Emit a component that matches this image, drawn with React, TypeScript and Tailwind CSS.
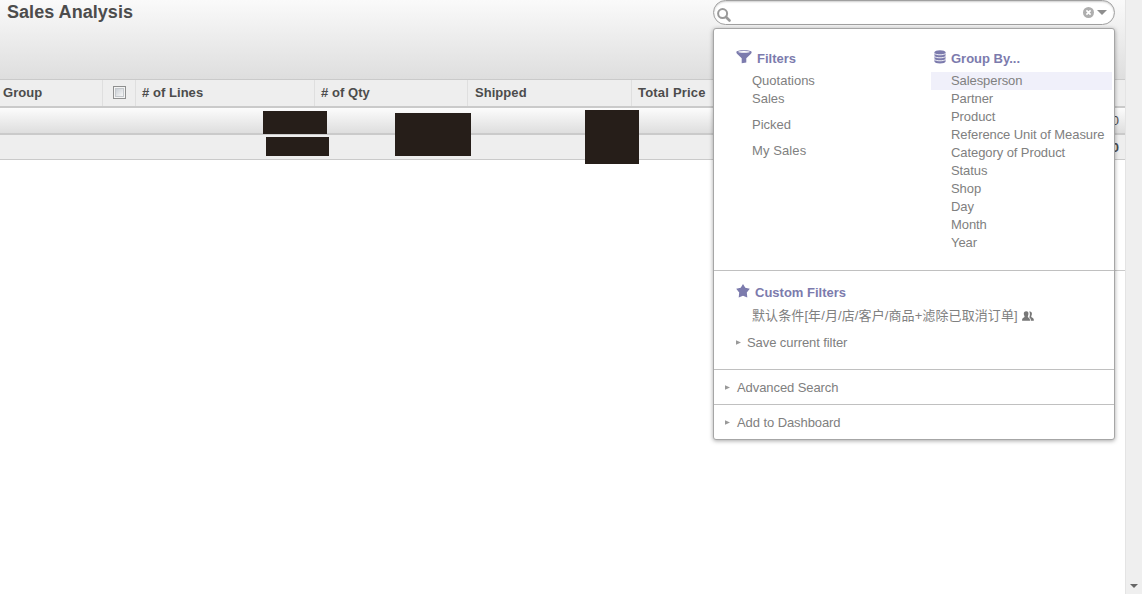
import React from "react";

const COLUMNS = [
  { label: "# of Lines", cell: "w-[179px] border-r pl-[6px]" },
  { label: "# of Qty", cell: "w-[153px] border-r pl-[6px]" },
  { label: "Shipped", cell: "w-[164px] border-r pl-[7px]" },
  { label: "Total Price", cell: "w-[493px] pl-[6px] tracking-[0.2px]" },
];

const GROUPS = [
  "Salesperson",
  "Partner",
  "Product",
  "Reference Unit of Measure",
  "Category of Product",
  "Status",
  "Shop",
  "Day",
  "Month",
  "Year",
];

function SearchIcon() {
  return (
    <svg width="14" height="14" viewBox="0 0 14 14" fill="none" stroke="#9a9a9a">
      <circle cx="5.6" cy="5.6" r="4.5" strokeWidth="2" />
      <path d="M9 9l3.500 3.500" strokeWidth="2.600" strokeLinecap="round" />
    </svg>
  );
}

function ClearIcon() {
  return (
    <svg width="11" height="11" viewBox="0 0 11 11">
      <circle cx="5.5" cy="5.5" r="5.5" fill="#aeaeae" />
      <path d="M3.4 3.4l4.2 4.2M7.6 3.4L3.4 7.6" stroke="#fff" strokeWidth="1.6" />
    </svg>
  );
}

function FunnelIcon() {
  return (
    <svg width="16" height="14" viewBox="0 0 16 14">
      <path d="M.3 2C.3.8 3.800.2 8 .2s7.700.6 7.700 1.800c0 .8-.5 1.500-1.200 2.200L10.300 8.200v4.300L5.700 13.300V8.200L1.500 4.200C.8 3.500.3 2.800.3 2z" fill="#7c7bad" />
      <ellipse cx="8" cy="1.900" rx="5.800" ry="0.8" fill="#fff" />
    </svg>
  );
}

function DatabaseIcon() {
  return (
    <svg width="12" height="14" viewBox="0 0 12 14">
      <path d="M.5 2.3C.5 1.1 3 .3 6 .3s5.500.8 5.500 2v9c0 1.400-2.500 2.200-5.500 2.200S.5 12.700.5 11.300z" fill="#7c7bad" />
      <path d="M.5 3.300C1.400 5.300 10.600 5.300 11.500 3.300M.5 6.300C1.400 8.300 10.600 8.300 11.500 6.300M.5 9.300C1.400 11.300 10.600 11.300 11.500 9.300" fill="none" stroke="#fff" strokeWidth="0.9" />
    </svg>
  );
}

function StarIcon() {
  return (
    <svg width="14" height="14" viewBox="0 0 14 14">
      <path d="M7 0l2.300 3.800 4.500 1-3 3.700.5 5L7 11.700l-4.300 1.800.5-5L.2 4.800l4.500-1z" fill="#7c7bad" />
    </svg>
  );
}

function UsersIcon() {
  return (
    <svg width="12" height="10" viewBox="0 0 12 10">
      <path d="M7.200.6C8.900.1 10.100 1.200 9.900 2.900c-.1 1.200-.7 2-.7 2.900 0 .9 2.600 1 2.600 2.600v1.400H8.900C8.900 7.400 7.300 7 7.300 6.300 7.900 5.200 8.200 2.600 7.200.6z" fill="#777" />
      <path d="M4.200.2c1.700 0 2.500 1.100 2.400 2.700-.1 1.200-.8 2-.8 2.900 0 .9 2.500 1 2.500 2.700v1.300H.1V8.500c0-1.700 2.500-1.800 2.500-2.700 0-.9-.7-1.700-.8-2.900C1.700 1.300 2.500.2 4.200.2z" fill="#777" />
      <path d="M6.900 1.200c.5 2-.1 4-.5 4.900 0 .8 2.100.8 2.100 3.700" fill="none" stroke="#fff" strokeWidth="0.6" />
    </svg>
  );
}

function Arrow() {
  return (
    <svg width="5" height="6" viewBox="0 0 5 6" className="shrink-0">
      <path d="M0 .2L5 2.500 0 4.800z" fill="#999" />
    </svg>
  );
}

function Heading({ children }: { children: React.ReactNode }) {
  return <h2 className="text-[13px] leading-[18px] font-bold tracking-[0px] text-[#7c7bad]">{children}</h2>;
}

function FilterPanel() {
  return (
    <div className="absolute top-7 left-[713px] h-[412px] w-[402px] overflow-hidden rounded-[3px] border border-[#a6a6a6] bg-white text-[13px] leading-[18px] tracking-[-0.08px] text-[#808080] shadow-[0_1px_4px_rgba(0,0,0,0.35)]">
      <div className="flex h-[242px] border-b border-[#c0c0c0] pt-[21px]">
        <section className="w-[217px] pl-[22px] tracking-[0px]">
          <div className="flex gap-[5px]">
            <FunnelIcon />
            <Heading>Filters</Heading>
          </div>
          <ul className="mt-1 pl-4">
            <li>Quotations</li>
            <li>Sales</li>
            <li className="mt-2">Picked</li>
            <li className="mt-2 tracking-[0.1px]">My Sales</li>
          </ul>
        </section>
        <section className="w-[181px]">
          <div className="flex gap-[5px] pl-[3px]">
            <DatabaseIcon />
            <Heading>Group By...</Heading>
          </div>
          <ul className="mt-1">
            {GROUPS.map((name, i) => (
              <li key={name} className={i === 0 ? "bg-[#f0f0fa] pl-5 whitespace-nowrap" : "pl-5 whitespace-nowrap"}>
                {name}
              </li>
            ))}
          </ul>
        </section>
      </div>
      <section className="h-[99px] border-b border-[#c0c0c0] pt-[13px] pl-[22px]">
        <div className="flex gap-[5px]">
          <StarIcon />
          <Heading>Custom Filters</Heading>
        </div>
        <div className="mt-[5px] flex items-center gap-1 pl-4 font-['Liberation_Sans','Noto_Sans_CJK_SC',sans-serif] tracking-[0.1px] whitespace-nowrap">
          <span>默认条件[年/月/店/客户/商品+滤除已取消订单]</span>
          <UsersIcon />
        </div>
        <div className="mt-[9px] flex items-center gap-[6px]">
          <Arrow />
          <span>Save current filter</span>
        </div>
      </section>
      <div className="flex h-[35px] items-center gap-[7px] border-b border-[#c0c0c0] pt-px pl-[11px]">
        <Arrow />
        <span>Advanced Search</span>
      </div>
      <div className="flex h-[34px] items-center gap-[7px] pt-px pl-[11px]">
        <Arrow />
        <span>Add to Dashboard</span>
      </div>
    </div>
  );
}

export default function App() {
  return (
    <div className="relative flex h-[594px] w-[1142px] overflow-hidden bg-white font-['Liberation_Sans',Arial,sans-serif] text-[#4c4c4c]">
      <main className="w-[1125px]">
        <header className="flex h-20 justify-between border-b border-[#cacaca] bg-linear-to-b from-[#fafafa] to-[#dedede]">
          <h1 className="pt-px pl-[7px] text-[18px] leading-[22px] font-bold tracking-[0.04px]">Sales Analysis</h1>
          <div className="mr-[10px] flex h-[25px] w-[402px] items-center rounded-full border border-[#a0a0a0] bg-white pr-[7px] pl-[3px] shadow-[inset_0_1px_2px_rgba(0,0,0,0.2)]">
            <span className="pt-[4px]"><SearchIcon /></span>
            <span className="ml-auto"><ClearIcon /></span>
            <svg width="10" height="5" viewBox="0 0 10 5" className="ml-[3px]">
              <path d="M0 0h10L5 5z" fill="#8e8e8e" />
            </svg>
          </div>
        </header>
        <div className="flex h-7 border-b-2 border-[#cacaca] bg-[#eeeeee] text-[13px] leading-[25px] font-bold tracking-[0.05px]">
          <div className="w-[103px] border-r border-[#dfdfdf] pl-[3px]">Group</div>
          <div className="flex w-[33px] items-center justify-center border-r border-[#dfdfdf] pb-px">
            <span className="size-[13px] border border-[#8e8f8f] bg-[#f4f4f4] p-px">
              <span className="block size-[9px] border border-[#c4c8cc] bg-linear-to-br from-[#cbd0d6] to-[#f6f6f6]" />
            </span>
          </div>
          {COLUMNS.map((c) => (
            <div key={c.label} className={`shrink-0 border-[#dfdfdf] ${c.cell}`}>
              {c.label}
            </div>
          ))}
        </div>
        <div className="flex h-[27px] justify-end border-b-2 border-[#cacaca] bg-linear-to-b from-[#fcfcfc] to-[#dedede] pr-[6px] text-[13px] leading-[25px]">0</div>
        <div className="flex h-[25px] justify-end border-b border-[#cacaca] bg-[#eeeeee] pr-[6px] text-[13px] leading-[25px] font-bold">0</div>
        <div className="ml-auto h-[111px] w-[400px] border-b border-[#cacaca]" />
      </main>
      <aside className="flex w-[17px] flex-col items-center justify-end border-l border-[#e4e4e4] bg-[#efefef] pb-[6px]">
        <svg width="8" height="4" viewBox="0 0 8 4">
          <path d="M0 0h8L4 4z" fill="#666" />
        </svg>
      </aside>
      <div className="absolute top-[111px] left-[263px] h-[23px] w-16 bg-[#261e19]" />
      <div className="absolute top-[137px] left-[266px] h-[19px] w-[63px] bg-[#261e19]" />
      <div className="absolute top-[113px] left-[395px] h-[43px] w-[76px] bg-[#261e19]" />
      <div className="absolute top-[110px] left-[585px] h-[54px] w-[54px] bg-[#261e19]" />
      <FilterPanel />
    </div>
  );
}
